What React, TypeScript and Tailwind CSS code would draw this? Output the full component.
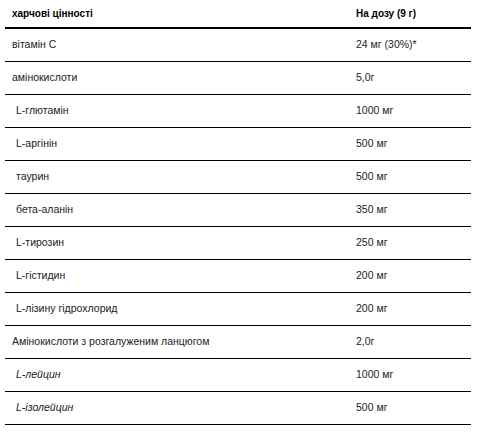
import React from "react";

const rows: { name: string; value: string; indent?: boolean; italic?: boolean }[] = [
  { name: "вітамін C", value: "24 мг (30%)*" },
  { name: "амінокислоти", value: "5,0г" },
  { name: "L-глютамін", value: "1000 мг", indent: true },
  { name: "L-аргінін", value: "500 мг", indent: true },
  { name: "таурин", value: "500 мг", indent: true },
  { name: "бета-аланін", value: "350 мг", indent: true },
  { name: "L-тирозин", value: "250 мг", indent: true },
  { name: "L-гістидин", value: "200 мг", indent: true },
  { name: "L-лізину гідрохлорид", value: "200 мг", indent: true },
  { name: "Амінокислоти з розгалуженим ланцюгом", value: "2,0г" },
  { name: "L-лейцин", value: "1000 мг", indent: true, italic: true },
  { name: "L-ізолейцин", value: "500 мг", indent: true, italic: true },
];

export default function App() {
  return (
    <div className="w-[482px] h-[437px] bg-white font-['Liberation_Sans',Arial,sans-serif] text-[10.5px] text-[#222]">
      <div className="ml-[5px] w-[466px]">
        <div className="flex h-[29px] items-center border-b-2 border-black text-[10px] font-bold text-black">
          <div className="w-[344px] pl-[7px]">харчові цінності</div>
          <div className="pl-[7px]">На дозу (9 г)</div>
        </div>
        {rows.map((r) => (
          <div key={r.name} className="flex h-[33px] items-center border-b border-black">
            <div className={`w-[344px] ${r.indent ? "pl-[11px]" : "pl-[7px]"} ${r.italic ? "italic" : ""}`}>
              {r.name}
            </div>
            <div className="pl-[7px]">{r.value}</div>
          </div>
        ))}
      </div>
    </div>
  );
}
